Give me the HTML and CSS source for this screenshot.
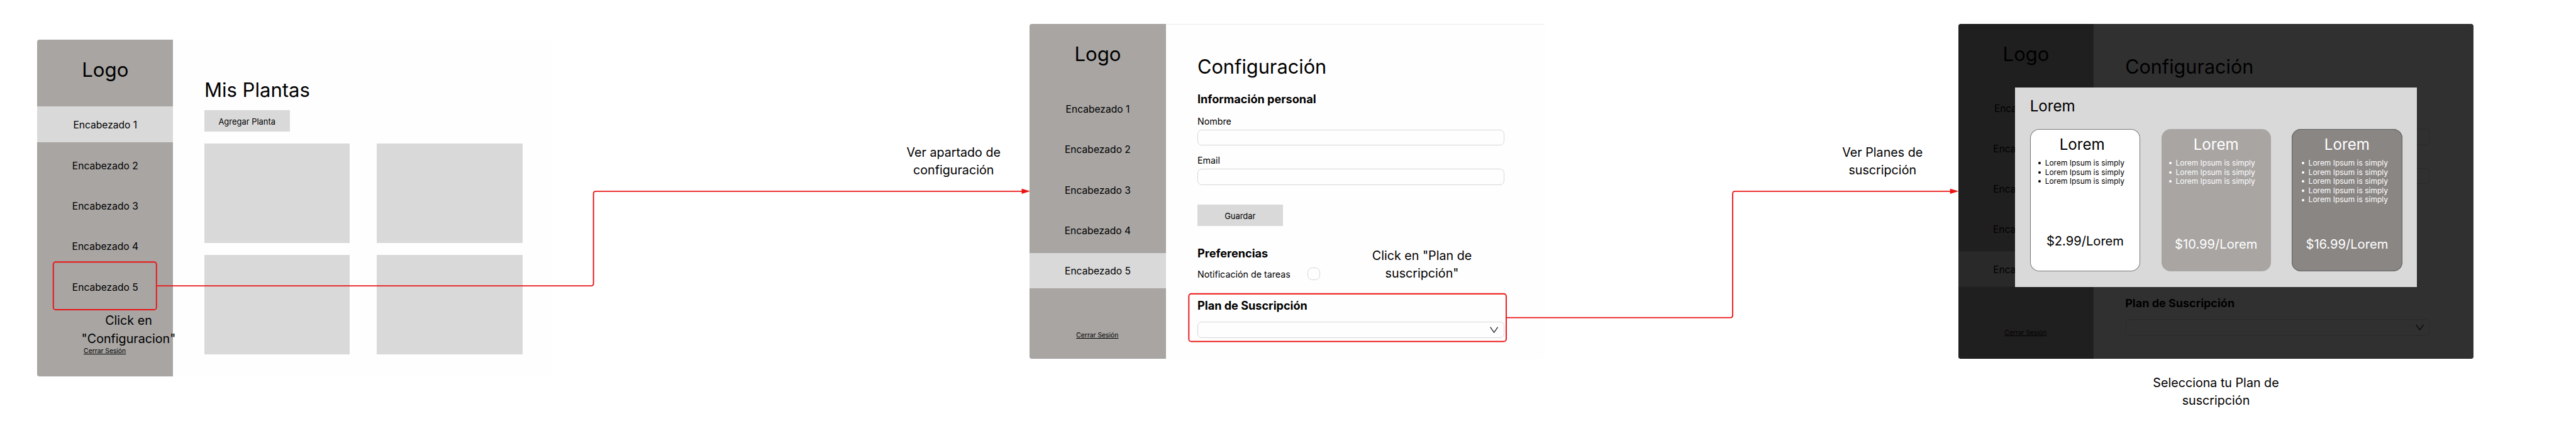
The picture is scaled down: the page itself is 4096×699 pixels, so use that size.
FILE: index.html
```html
<!DOCTYPE html>
<html lang="es">
<head>
<meta charset="utf-8">
<title>Flujo: Plan de suscripción</title>
<link rel="stylesheet" href="styles.css">
</head>
<body>
<main class="canvas">

  <section class="frame frame-plants">
    <div class="screen">
      <aside class="sidebar">
        <div class="logo">Logo</div>
        <nav class="nav">
          <a class="nav-item active">Encabezado 1</a>
          <a class="nav-item">Encabezado 2</a>
          <a class="nav-item">Encabezado 3</a>
          <a class="nav-item">Encabezado 4</a>
          <a class="nav-item">Encabezado 5</a>
        </nav>
        <a class="logout">Cerrar Sesión</a>
      </aside>
      <div class="plants">
        <h1 class="plants-title">Mis Plantas</h1>
        <button class="button">Agregar Planta</button>
        <div class="plant-grid">
          <div class="plant"></div>
          <div class="plant"></div>
          <div class="plant"></div>
          <div class="plant"></div>
        </div>
      </div>
    </div>
  </section>

  <section class="frame frame-settings">
    <div class="screen">
      <aside class="sidebar">
        <div class="logo">Logo</div>
        <nav class="nav">
          <a class="nav-item">Encabezado 1</a>
          <a class="nav-item">Encabezado 2</a>
          <a class="nav-item">Encabezado 3</a>
          <a class="nav-item">Encabezado 4</a>
          <a class="nav-item active">Encabezado 5</a>
        </nav>
        <a class="logout">Cerrar Sesión</a>
      </aside>
      <div class="settings">
        <h1 class="settings-title">Configuración</h1>
        <h2 class="heading heading-info">Información personal</h2>
        <div class="label label-name">Nombre</div>
        <div class="field"></div>
        <div class="label label-email">Email</div>
        <div class="field"></div>
        <button class="button save">Guardar</button>
        <h2 class="heading heading-prefs">Preferencias</h2>
        <div class="toggle-row">
          <div class="label toggle-label">Notificación de tareas</div>
          <div class="checkbox"></div>
        </div>
        <h2 class="heading heading-plan">Plan de Suscripción</h2>
        <div class="field select">
          <svg class="chevron" viewBox="0 0 21 16"><path d="M1 1 L10.5 14.5 L20 1"/></svg>
        </div>
      </div>
    </div>
  </section>

  <section class="frame frame-modal">
    <div class="screen screen-dimmed">
      <aside class="sidebar">
        <div class="logo">Logo</div>
        <nav class="nav">
          <a class="nav-item">Encabezado 1</a>
          <a class="nav-item">Encabezado 2</a>
          <a class="nav-item">Encabezado 3</a>
          <a class="nav-item">Encabezado 4</a>
          <a class="nav-item active">Encabezado 5</a>
        </nav>
        <a class="logout">Cerrar Sesión</a>
      </aside>
      <div class="settings">
        <h1 class="settings-title">Configuración</h1>
        <h2 class="heading heading-info">Información personal</h2>
        <div class="label label-name">Nombre</div>
        <div class="field"></div>
        <div class="label label-email">Email</div>
        <div class="field"></div>
        <button class="button save">Guardar</button>
        <h2 class="heading heading-prefs">Preferencias</h2>
        <div class="toggle-row">
          <div class="label toggle-label">Notificación de tareas</div>
          <div class="checkbox"></div>
        </div>
        <h2 class="heading heading-plan">Plan de Suscripción</h2>
        <div class="field select">
          <svg class="chevron" viewBox="0 0 21 16"><path d="M1 1 L10.5 14.5 L20 1"/></svg>
        </div>
      </div>
    </div>
    <div class="overlay"></div>
    <div class="modal">
      <h2 class="modal-title">Lorem</h2>
      <div class="plans">
        <article class="plan plan-basic">
          <h3 class="plan-name">Lorem</h3>
          <ul class="features">
            <li>Lorem Ipsum is simply</li>
            <li>Lorem Ipsum is simply</li>
            <li>Lorem Ipsum is simply</li>
          </ul>
          <div class="price">$2.99/Lorem</div>
        </article>
        <article class="plan plan-medium">
          <h3 class="plan-name">Lorem</h3>
          <ul class="features">
            <li>Lorem Ipsum is simply</li>
            <li>Lorem Ipsum is simply</li>
            <li>Lorem Ipsum is simply</li>
          </ul>
          <div class="price">$10.99/Lorem</div>
        </article>
        <article class="plan plan-premium">
          <h3 class="plan-name">Lorem</h3>
          <ul class="features">
            <li>Lorem Ipsum is simply</li>
            <li>Lorem Ipsum is simply</li>
            <li>Lorem Ipsum is simply</li>
            <li>Lorem Ipsum is simply</li>
            <li>Lorem Ipsum is simply</li>
          </ul>
          <div class="price">$16.99/Lorem</div>
        </article>
      </div>
    </div>
  </section>

  <svg class="connectors" viewBox="0 0 6489 1107">
    <rect x="134.2" y="659.5" width="259.9" height="120" rx="6"/>
    <path d="M395.6 719.4 H1489 Q1495 719.4 1495 713.4 V487.4 Q1495 481.4 1501 481.4 H2576"/>
    <path class="tip" d="M2573.7 474.7 L2595 481.4 L2573.7 488.1 Z"/>
    <rect x="2994.7" y="739.5" width="799.5" height="120" rx="6"/>
    <path d="M3795.7 799.4 H4358.7 Q4364.7 799.4 4364.7 793.4 V487.4 Q4364.7 481.4 4370.7 481.4 H4914"/>
    <path class="tip" d="M4912.3 474.7 L4934 481.4 L4912.3 488.1 Z"/>
  </svg>

  <p class="note note-click-settings">Click en<br>"Configuracion"</p>
  <p class="note note-open-settings">Ver apartado de<br>configuración</p>
  <p class="note note-click-plan">Click en "Plan de<br>suscripción"</p>
  <p class="note note-open-plans">Ver Planes de<br>suscripción</p>
  <p class="note note-choose-plan">Selecciona tu Plan de<br>suscripción</p>

</main>
</body>
</html>
```
FILE: styles.css
```css
/* 1rem is 100 units of a board 6489 units wide */
html {
  font-size: calc(100vw / 64.89);
}

*,
*::before {
  box-sizing: border-box;
}

body,
h1,
h2,
h3,
p,
ul {
  margin: 0;
  padding: 0;
}

body {
  background: #fff;
  color: #000;
  font-family: "Inter", "Liberation Sans", sans-serif;
  overflow: hidden;
}

h1,
h3 {
  font-weight: 400;
}

.canvas {
  position: relative;
  width: 100vw;
  height: 100vh;
  overflow: hidden;
}

/* Frames placed on the board */
.frame {
  position: absolute;
  width: 12.972rem;
  height: 8.438rem;
  border-radius: 0.06rem;
  background: #fefefe;
  overflow: hidden;
}

.frame-plants {
  left: 0.938rem;
  top: 0.995rem;
  height: 8.472rem;
}

.frame-settings {
  left: 25.94rem;
  top: 0.595rem;
  box-shadow: inset 0 1px #ececec;
}

.frame-modal {
  left: 49.34rem;
  top: 0.597rem;
}

.screen {
  display: flex;
  height: 100%;
}

.screen-dimmed {
  transform: scale(0.9945, 0.992);
  transform-origin: 0 0;
  height: 101%;
}

/* Sidebar */
.sidebar {
  flex: none;
  display: flex;
  flex-direction: column;
  width: 3.424rem;
  background: #a8a5a3;
  text-align: center;
}

.logo {
  height: 1.688rem;
  padding-top: 0.481rem;
  font-size: 0.494rem;
  line-height: 0.6rem;
}

.nav {
  display: flex;
  flex-direction: column;
  gap: 0.12rem;
}

.nav-item {
  height: 0.9rem;
  padding-top: 0.046rem;
  font-size: 0.247rem;
  line-height: 0.854rem;
}

.active {
  background: #d9d9d9;
}

.logout {
  margin-top: 1.065rem;
  padding-right: 0.02rem;
  font-size: 0.164rem;
  line-height: 0.2rem;
  text-decoration: underline;
  text-decoration-thickness: 1px;
  text-underline-offset: 0.022rem;
}

.button {
  display: block;
  width: 2.148rem;
  height: 0.54rem;
  padding: 0.05rem 0 0;
  border: 0;
  background: #d9d9d9;
  color: #000;
  font: 400 0.205rem/0.49rem "Inter", "Liberation Sans", sans-serif;
  text-align: center;
}

/* Plants screen */
.plants {
  padding: 0.973rem 0 0 0.786rem;
}

.plants-title {
  font-size: 0.492rem;
  line-height: 0.6rem;
  margin-bottom: 0.202rem;
}

.plant-grid {
  display: grid;
  grid-template-columns: repeat(2, 3.665rem);
  grid-auto-rows: 2.5rem;
  gap: 0.3rem 0.684rem;
  margin-top: 0.303rem;
}

.plant {
  background: #d9d9d9;
}

/* Settings screen */
.settings {
  width: 8.525rem;
  padding: 0.785rem 0 0 0.8rem;
}

.settings-title {
  font-size: 0.487rem;
  line-height: 0.6rem;
}

.heading {
  font-size: 0.287rem;
  font-weight: 700;
  line-height: 0.36rem;
}

.heading-info {
  margin-top: 0.336rem;
}

.heading-prefs {
  margin-top: 0.512rem;
}

.heading-plan {
  margin-top: 0.466rem;
}

.label {
  font-size: 0.226rem;
  line-height: 0.28rem;
}

.label-name {
  margin-top: 0.232rem;
}

.label-email {
  margin-top: 0.228rem;
}

.field {
  height: 0.408rem;
  margin-top: 0.072rem;
  border: 1px solid #d6d6d6;
  border-radius: 0.11rem;
}

.save {
  margin-top: 0.486rem;
}

.toggle-row {
  display: flex;
  height: 0.313rem;
  margin-top: 0.178rem;
}

.toggle-label {
  flex: 0 0 2.772rem;
  padding-top: 0.034rem;
}

.checkbox {
  width: 0.31rem;
  border: 1px solid #d6d6d6;
  border-radius: 0.12rem;
}

.select {
  display: flex;
  justify-content: flex-end;
  align-items: center;
  margin-top: 0.224rem;
  padding-right: 0.14rem;
}

.chevron {
  width: 0.21rem;
  height: 0.16rem;
  fill: none;
  stroke: #1e1e2a;
  stroke-width: 2;
}

/* Plan picker */
.overlay {
  position: absolute;
  inset: 0;
  background: rgba(0, 0, 0, 0.812);
}

.modal {
  position: absolute;
  left: 1.414rem;
  top: 1.605rem;
  width: 10.132rem;
  height: 5.029rem;
  padding: 0.244rem 0 0 0.38rem;
  background: #d9d9d9;
}

.modal-title {
  font-size: 0.383rem;
  font-weight: 400;
  line-height: 0.46rem;
}

.plans {
  display: grid;
  grid-template-columns: 2.781rem 2.753rem 2.777rem;
  column-gap: 0.533rem;
  height: 3.58rem;
  margin-top: 0.346rem;
}

.plan {
  position: relative;
  display: flex;
  flex-direction: column;
  padding-bottom: 0.493rem;
  border-radius: 0.23rem;
  color: #fff;
}

.plan-basic {
  padding-bottom: 0.566rem;
  background: #fff;
  color: #000;
  box-shadow: inset 0 0 0 1px #777;
}

.plan-medium {
  background: #a8a5a3;
}

.plan-premium {
  background: #8a8684;
  box-shadow: inset 0 0 0 1px #5e5e60;
}

.plan-name {
  padding-top: 0.154rem;
  font-size: 0.383rem;
  line-height: 0.46rem;
  text-align: center;
}

.plan-basic .plan-name {
  padding-right: 0.15rem;
}

.features {
  margin-top: 0.127rem;
  padding-left: 0.192rem;
  list-style: none;
  font-size: 0.19rem;
  line-height: 0.231rem;
}

.plan-basic .features {
  padding-left: 0.213rem;
}

.plan-premium .features {
  padding-left: 0.251rem;
}

.features li {
  display: flex;
  align-items: center;
  gap: 0.102rem;
}

.features li::before {
  content: "";
  width: 0.065rem;
  height: 0.065rem;
  border-radius: 50%;
  background: currentColor;
}

.price {
  margin-top: auto;
  font-size: 0.319rem;
  line-height: 0.38rem;
  text-align: center;
}

/* Flow arrows and annotations */
.connectors {
  position: absolute;
  left: 0;
  top: 0;
  width: 64.89rem;
  height: 11.07rem;
  fill: none;
  stroke: #ea1313;
  stroke-width: 3;
}

.connectors .tip {
  fill: #ea1313;
  stroke: none;
}

.note {
  position: absolute;
  width: 4rem;
  font-size: 0.312rem;
  line-height: 0.45rem;
  text-align: center;
}

.note-click-settings {
  left: 1.24rem;
  top: 7.845rem;
}

.note-open-settings {
  left: 22.02rem;
  top: 3.612rem;
}

.note-click-plan {
  left: 33.82rem;
  top: 6.205rem;
}

.note-open-plans {
  left: 45.42rem;
  top: 3.607rem;
}

.note-choose-plan {
  left: 53.82rem;
  top: 9.408rem;
}
```
